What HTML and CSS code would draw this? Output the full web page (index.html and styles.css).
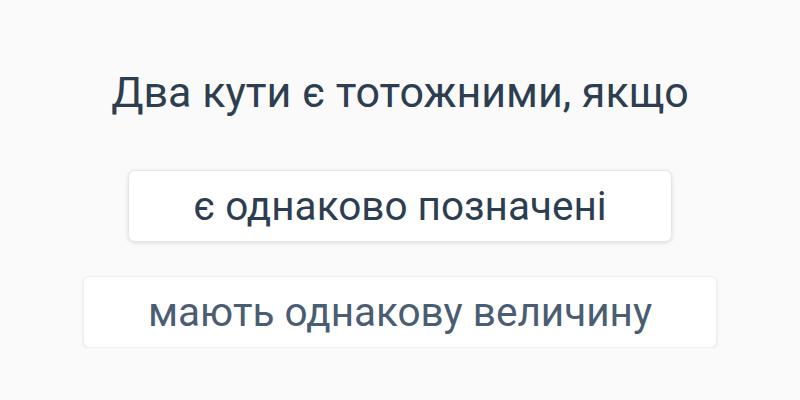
FILE: index.html
```html
<!DOCTYPE html>
<html lang="uk">
<head>
    <meta charset="UTF-8">
    <meta name="viewport" content="width=device-width, initial-scale=1.0">
    <title>Тотожні кути</title>
    <link rel="stylesheet" href="styles.css">
</head>
<body>
    <div class="quiz">
        <h1 class="question">Два кути є тотожними, якщо</h1>
        <div class="answers">
            <button class="answer">є однаково позначені</button>
            <button class="answer answer-light">мають однакову величину</button>
        </div>
    </div>
</body>
</html>
```

FILE: styles.css
```css
body {
    margin: 0;
    background: #fafafa;
    font-family: Roboto, 'Noto Sans', sans-serif;
    color: #2c3e50;
}
.quiz {
    display: flex;
    flex-direction: column;
    align-items: center;
    padding-top: 64px;
}
.question {
    margin: 0;
    font-size: 43px;
    font-weight: 400;
    line-height: 56px;
}
.answers {
    display: flex;
    flex-direction: column;
    align-items: center;
    gap: 34px;
    margin-top: 50px;
}
.answer {
    font-family: inherit;
    font-size: 40.5px;
    color: #2c3e50;
    background: #fff;
    border: 1px solid #e6e6e6;
    border-radius: 7px;
    padding: 0 64px;
    height: 72px;
    box-shadow: 0 1px 4px rgba(0, 0, 0, 0.12);
}
.answer-light {
    color: #4a5d73;
    border-color: #f0f0f0;
    box-shadow: 0 1px 3px rgba(0, 0, 0, 0.08);
}
```
